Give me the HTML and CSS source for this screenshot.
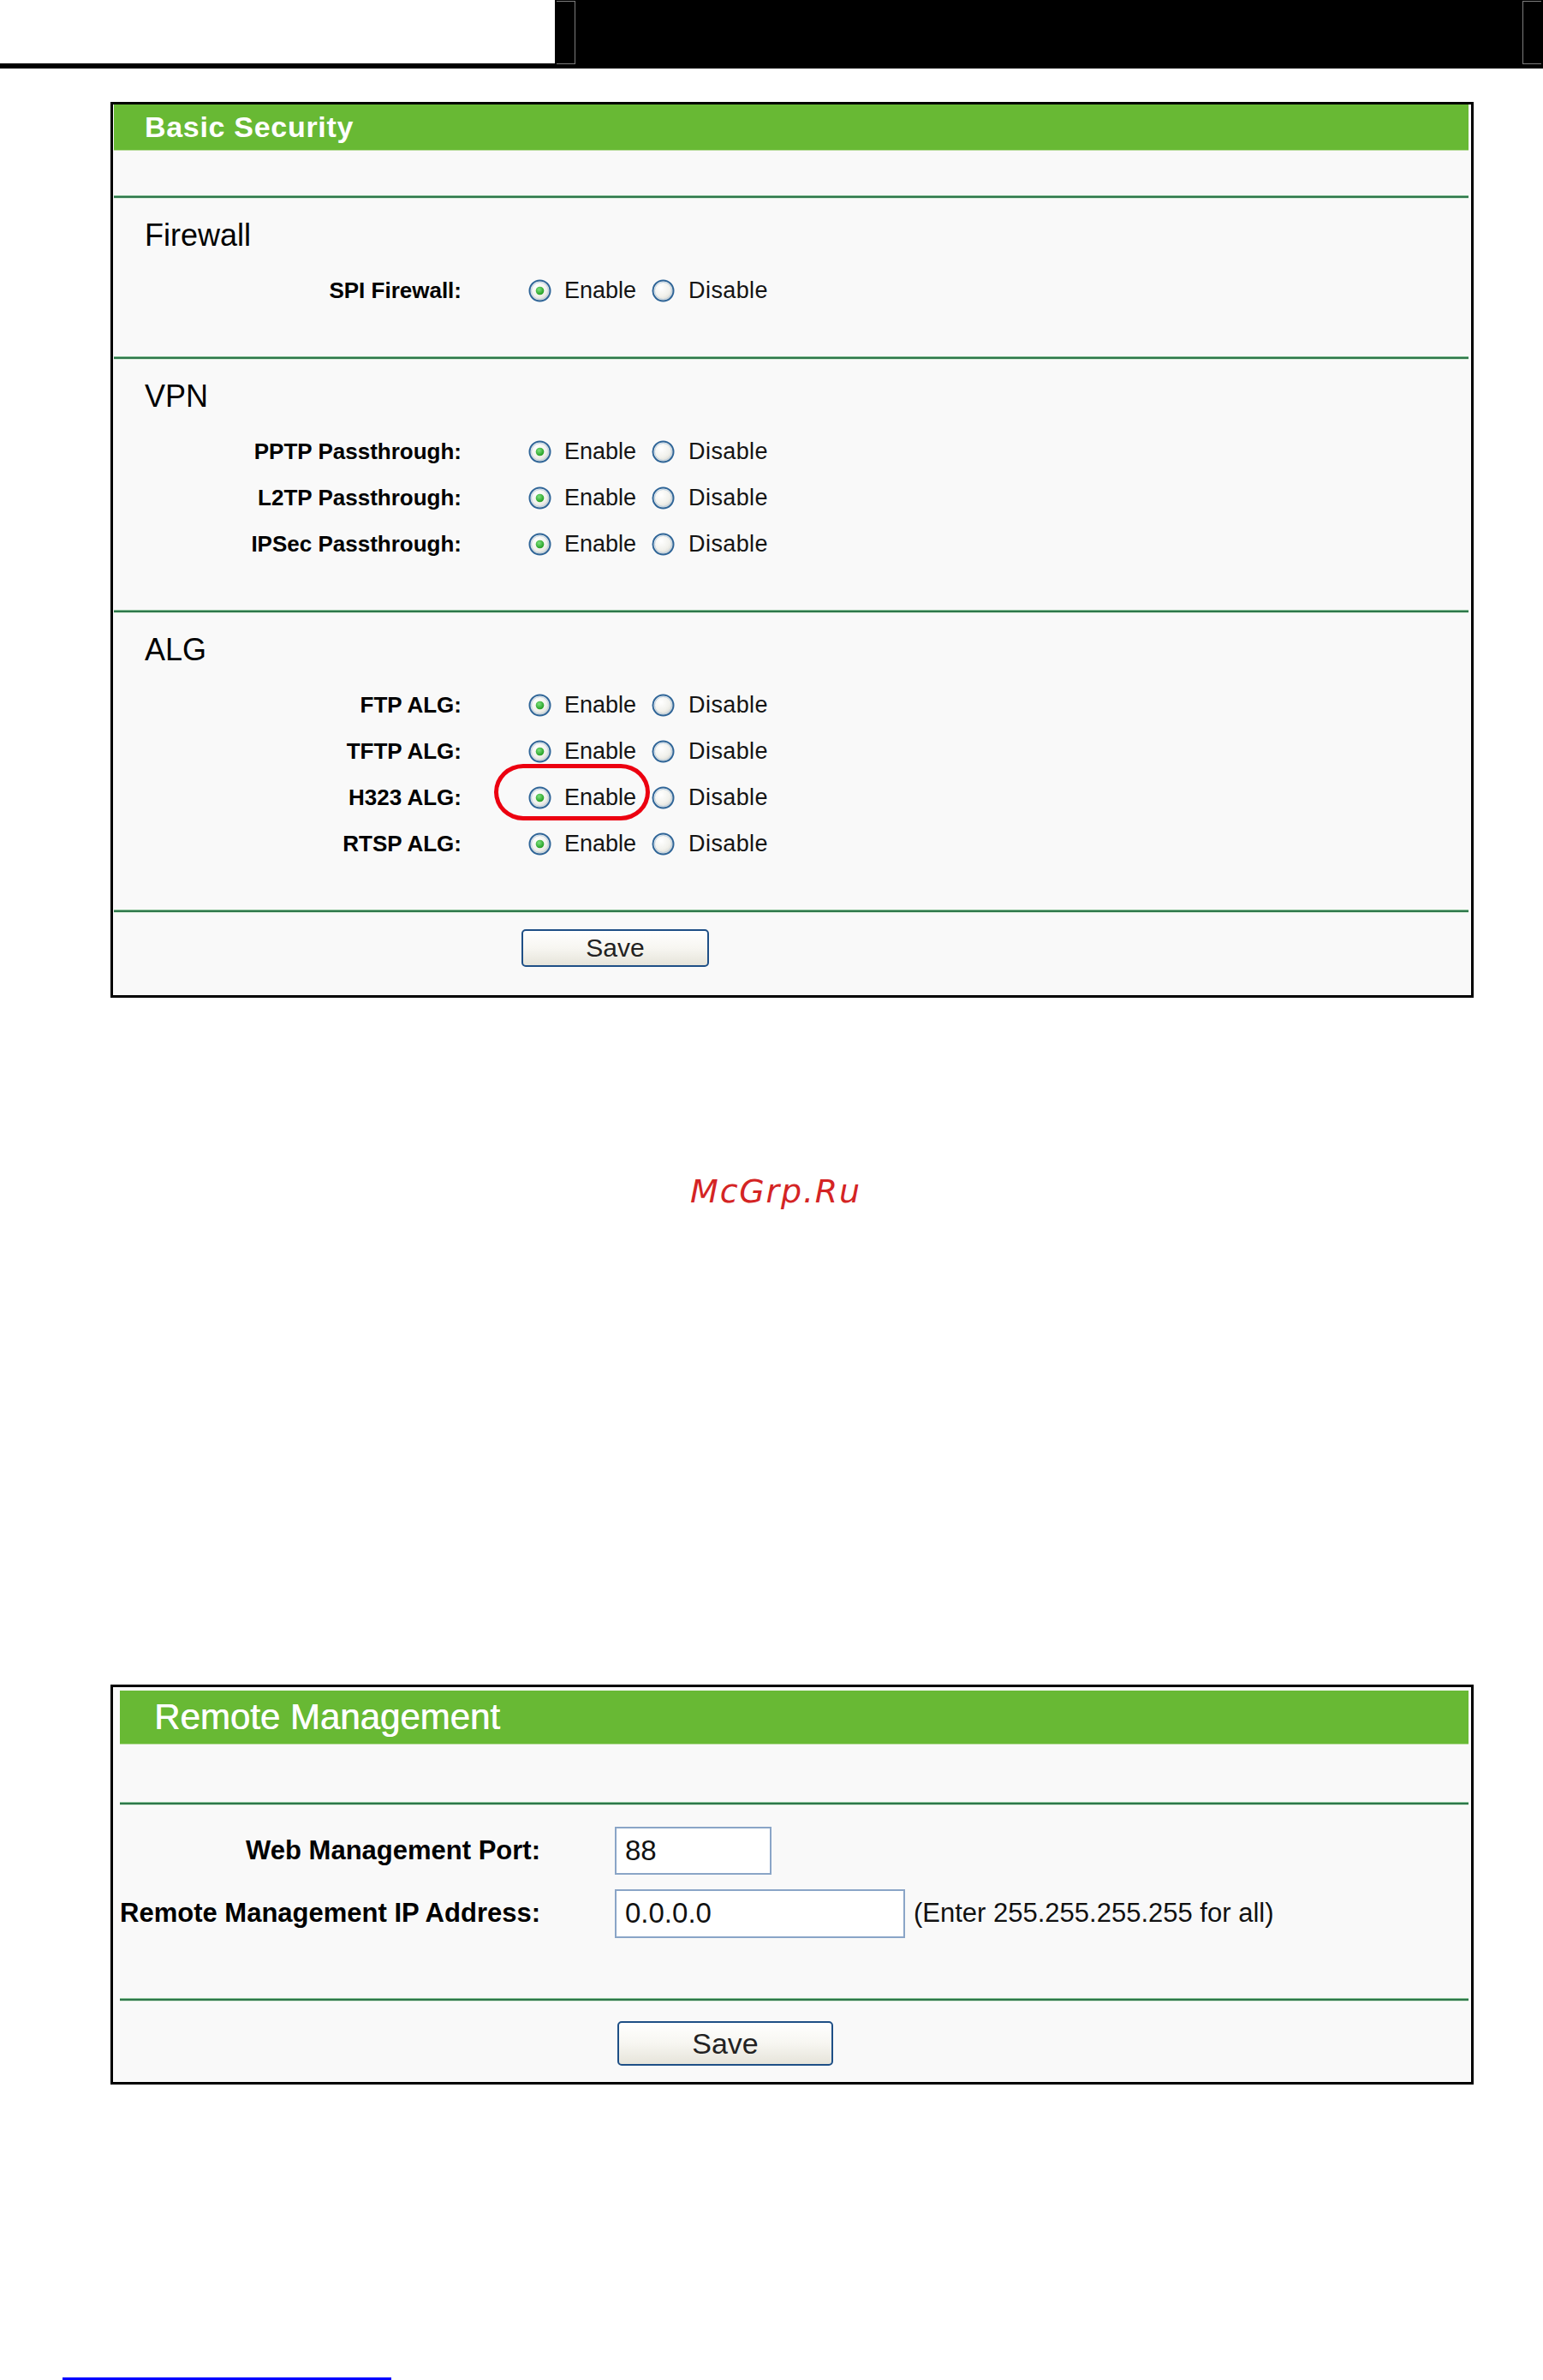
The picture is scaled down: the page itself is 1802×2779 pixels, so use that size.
FILE: index.html
```html
<!DOCTYPE html>
<html lang="en">
<head>
<meta charset="utf-8">
<title>Basic Security / Remote Management</title>
<link rel="stylesheet" href="styles.css">
</head>
<body>
<svg class="defs" width="0" height="0" aria-hidden="true">
  <defs>
    <radialGradient id="rfill" cx="40%" cy="35%" r="70%">
      <stop offset="0" stop-color="#ffffff"/>
      <stop offset="0.6" stop-color="#f1f1ec"/>
      <stop offset="1" stop-color="#d6d6cf"/>
    </radialGradient>
    <radialGradient id="rdot" cx="40%" cy="35%" r="70%">
      <stop offset="0" stop-color="#7fe07f"/>
      <stop offset="1" stop-color="#1a9a1a"/>
    </radialGradient>
    <symbol id="radio-off" viewBox="0 0 27 27">
      <circle cx="13.5" cy="13.5" r="12" fill="url(#rfill)" stroke="#2f6598" stroke-width="2"/>
      <circle cx="13.5" cy="13.5" r="10" fill="none" stroke="#b9cde0" stroke-width="1"/>
    </symbol>
    <symbol id="radio-on" viewBox="0 0 27 27">
      <circle cx="13.5" cy="13.5" r="12" fill="url(#rfill)" stroke="#2f6598" stroke-width="2"/>
      <circle cx="13.5" cy="13.5" r="10" fill="none" stroke="#b9cde0" stroke-width="1"/>
      <circle cx="13.5" cy="13.5" r="4.8" fill="url(#rdot)"/>
    </symbol>
  </defs>
</svg>

<div class="topbar">
  <div class="tb-white"></div>
  <div class="tb-mark tb-mark-l"></div>
  <div class="tb-fill"></div>
  <div class="tb-mark tb-mark-r"></div>
</div>

<div class="panel panel-sec">
  <div class="panel-title sec-title">Basic Security</div>
  <div class="gap-top"></div>
  <div class="sep"></div>

  <div class="section">
    <div class="sec-head">Firewall</div>
    <div class="rows">
      <div class="row">
        <div class="lbl">SPI Firewall:</div>
        <div class="opts">
          <svg class="radio"><use href="#radio-on"/></svg><span class="opt-txt">Enable</span>
          <svg class="radio radio2"><use href="#radio-off"/></svg><span class="opt-txt">Disable</span>
        </div>
      </div>
    </div>
  </div>
  <div class="sep"></div>

  <div class="section">
    <div class="sec-head">VPN</div>
    <div class="rows">
      <div class="row">
        <div class="lbl">PPTP Passthrough:</div>
        <div class="opts">
          <svg class="radio"><use href="#radio-on"/></svg><span class="opt-txt">Enable</span>
          <svg class="radio radio2"><use href="#radio-off"/></svg><span class="opt-txt">Disable</span>
        </div>
      </div>
      <div class="row">
        <div class="lbl">L2TP Passthrough:</div>
        <div class="opts">
          <svg class="radio"><use href="#radio-on"/></svg><span class="opt-txt">Enable</span>
          <svg class="radio radio2"><use href="#radio-off"/></svg><span class="opt-txt">Disable</span>
        </div>
      </div>
      <div class="row">
        <div class="lbl">IPSec Passthrough:</div>
        <div class="opts">
          <svg class="radio"><use href="#radio-on"/></svg><span class="opt-txt">Enable</span>
          <svg class="radio radio2"><use href="#radio-off"/></svg><span class="opt-txt">Disable</span>
        </div>
      </div>
    </div>
  </div>
  <div class="sep"></div>

  <div class="section">
    <div class="sec-head">ALG</div>
    <div class="rows">
      <div class="row">
        <div class="lbl">FTP ALG:</div>
        <div class="opts">
          <svg class="radio"><use href="#radio-on"/></svg><span class="opt-txt">Enable</span>
          <svg class="radio radio2"><use href="#radio-off"/></svg><span class="opt-txt">Disable</span>
        </div>
      </div>
      <div class="row">
        <div class="lbl">TFTP ALG:</div>
        <div class="opts">
          <svg class="radio"><use href="#radio-on"/></svg><span class="opt-txt">Enable</span>
          <svg class="radio radio2"><use href="#radio-off"/></svg><span class="opt-txt">Disable</span>
        </div>
      </div>
      <div class="row">
        <div class="lbl">H323 ALG:</div>
        <div class="opts">
          <svg class="radio"><use href="#radio-on"/></svg><span class="opt-txt">Enable</span>
          <svg class="radio radio2"><use href="#radio-off"/></svg><span class="opt-txt">Disable</span>
          <div class="highlight"></div>
        </div>
      </div>
      <div class="row">
        <div class="lbl">RTSP ALG:</div>
        <div class="opts">
          <svg class="radio"><use href="#radio-on"/></svg><span class="opt-txt">Enable</span>
          <svg class="radio radio2"><use href="#radio-off"/></svg><span class="opt-txt">Disable</span>
        </div>
      </div>
    </div>
  </div>
  <div class="sep"></div>

  <div class="save-area save-area-1">
    <button class="btn btn1" type="button">Save</button>
  </div>
</div>

<div class="watermark">McGrp.Ru</div>

<div class="panel panel-rm">
  <div class="panel-title rm-title">Remote Management</div>
  <div class="gap-top-rm"></div>
  <div class="sep"></div>
  <div class="rm-rows">
    <div class="rm-row">
      <div class="rm-lbl">Web Management Port:</div>
      <div class="field field-port">88</div>
    </div>
    <div class="rm-row">
      <div class="rm-lbl">Remote Management IP Address:</div>
      <div class="field field-ip">0.0.0.0</div>
      <span class="hint">(Enter 255.255.255.255 for all)</span>
    </div>
  </div>
  <div class="sep"></div>
  <div class="save-area save-area-2">
    <button class="btn btn2" type="button">Save</button>
  </div>
</div>

<div class="footer-line"></div>
</body>
</html>
```

FILE: styles.css
```css
html, body {
  margin: 0;
  padding: 0;
  background: #ffffff;
}
body {
  width: 1802px;
  font-family: "Liberation Sans", Arial, sans-serif;
  color: #000;
}
.defs {
  position: absolute;
  width: 0;
  height: 0;
  overflow: hidden;
}

/* top bar */
.topbar {
  height: 80px;
  background: #000;
  display: flex;
  align-items: flex-start;
}
.tb-white {
  width: 648px;
  height: 74px;
  background: #fff;
  flex: none;
}
.tb-mark {
  height: 72px;
  width: 21px;
  margin-top: 1px;
  border: 1px solid #7c7c7c;
  flex: none;
}
.tb-mark-l {
  margin-left: 2px;
  border-left: none;
}
.tb-mark-r {
  margin-right: 2px;
  border-right: none;
}
.tb-fill {
  flex: 1;
}

/* panels */
.panel {
  margin-left: 129px;
  width: 1592px;
  box-sizing: border-box;
  border: 3px solid #000;
  background: #f9f9f9;
}
.panel-sec {
  margin-top: 39px;
  padding: 0 3px 0 1px;
}
.panel-rm {
  margin-top: 556px;
  padding: 4px 3px 0 8px;
}
.panel-title {
  background: #68b934;
  color: #fff;
  display: flex;
  align-items: center;
  box-shadow: 0 1px 0 #b8dc9c;
}
.sec-title {
  height: 53px;
  padding-left: 36px;
  font-size: 34px;
  font-weight: bold;
  letter-spacing: 0.7px;
}
.rm-title {
  height: 62px;
  padding-left: 40px;
  font-size: 42px;
  font-weight: normal;
  text-shadow: 0.6px 0 0 #fff;
}
.gap-top {
  height: 53px;
}
.gap-top-rm {
  height: 68px;
}
.sep {
  height: 2px;
  background: #2e774b;
  border-top: 1px solid #8dc49b;
  border-bottom: 1px solid #d3e9d5;
}

/* sections */
.section {
  padding-left: 36px;
  padding-bottom: 50px;
}
.sec-head {
  margin-top: 28px;
  height: 30px;
  line-height: 30px;
  font-size: 36px;
  color: #000;
}
.rows {
  margin-top: 22px;
  margin-left: -36px;
}
.row {
  height: 54px;
  display: flex;
  align-items: center;
}
.lbl {
  width: 406px;
  flex: none;
  text-align: right;
  font-size: 26px;
  font-weight: bold;
  color: #000;
}
.opts {
  position: relative;
  margin-left: 78px;
  display: flex;
  align-items: center;
  height: 54px;
}
.radio {
  width: 27px;
  height: 27px;
  flex: none;
}
.radio2 {
  margin-left: 18px;
}
.opt-txt {
  margin-left: 15px;
  font-size: 27px;
  color: #141414;
}
.radio2 + .opt-txt {
  margin-left: 16px;
  letter-spacing: 0.4px;
}
.highlight {
  position: absolute;
  left: -40px;
  top: -12px;
  width: 182px;
  height: 66px;
  box-sizing: border-box;
  border: 5px solid #ec0010;
  border-radius: 34px / 33px;
}

/* save buttons */
.save-area-1 {
  padding: 19px 0 33px 476px;
}
.save-area-2 {
  padding: 23px 0 19px 581px;
}
.btn {
  display: block;
  box-sizing: border-box;
  border: 2px solid #1e4f86;
  border-radius: 5px;
  background: linear-gradient(#ffffff 0%, #f7f6f1 50%, #e6e4da 100%);
  color: #222;
  font-family: "Liberation Sans", Arial, sans-serif;
  padding: 0;
}
.btn1 {
  width: 219px;
  height: 44px;
  font-size: 30px;
}
.btn2 {
  width: 252px;
  height: 52px;
  font-size: 34px;
}

/* watermark */
.watermark {
  margin-top: 206px;
  height: 40px;
  line-height: 40px;
  text-align: center;
  padding-left: 10px;
  font-family: "DejaVu Sans", sans-serif;
  font-style: oblique;
  font-size: 38px;
  letter-spacing: 1.8px;
  color: #d42424;
}

/* remote management rows */
.rm-rows {
  padding-top: 25px;
  padding-bottom: 71px;
  display: flex;
  flex-direction: column;
  gap: 17px;
}
.rm-row {
  display: flex;
  align-items: center;
  height: 56px;
}
.rm-lbl {
  width: 491px;
  flex: none;
  text-align: right;
  font-size: 31px;
  font-weight: bold;
  color: #000;
}
.field {
  margin-left: 87px;
  height: 56px;
  box-sizing: border-box;
  border: 2px solid #8aa5c7;
  background: #fff;
  padding-left: 10px;
  display: flex;
  align-items: center;
  font-size: 33px;
  color: #111;
  flex: none;
}
.field-port {
  width: 183px;
}
.field-ip {
  width: 339px;
  height: 57px;
}
.hint {
  margin-left: 10px;
  font-size: 31px;
  color: #111;
}

.footer-line {
  margin-top: 342px;
  margin-left: 73px;
  width: 384px;
  height: 3px;
  background: #0000ff;
}
```
